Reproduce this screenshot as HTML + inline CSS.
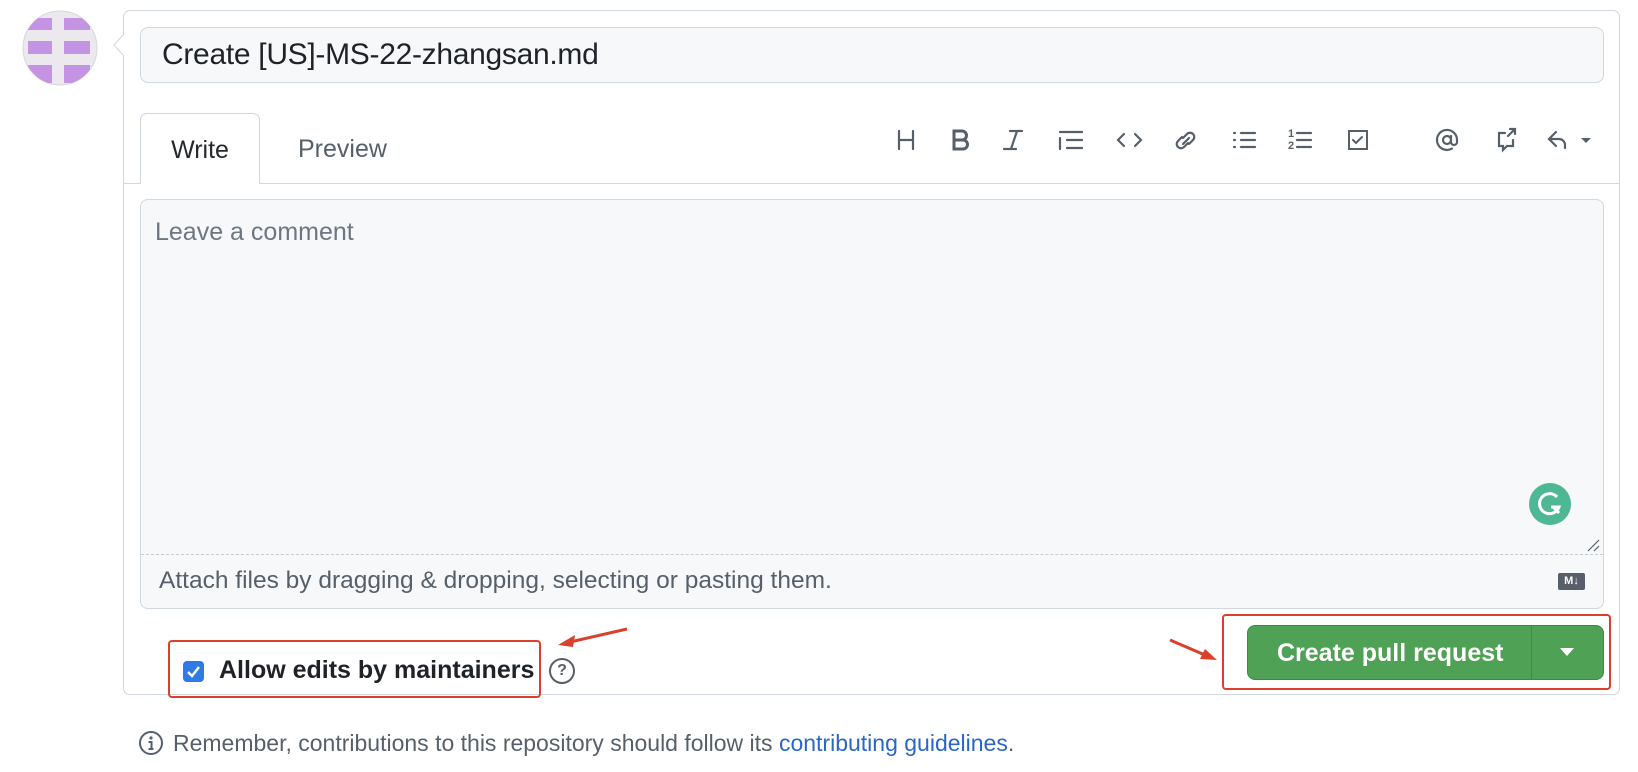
<!DOCTYPE html>
<html><head><meta charset="utf-8"><style>
*{box-sizing:border-box;margin:0;padding:0}
body{width:1638px;height:772px;background:#fff;font-family:"Liberation Sans",sans-serif;color:#24292f;position:relative;overflow:hidden}
.abs{position:absolute}
.box{left:123px;top:10px;width:1497px;height:685px;border:1px solid #d0d7de;border-radius:7px;background:#fff}
.title{left:140px;top:27px;width:1464px;height:56px;border:1px solid #d0d7de;border-radius:8px;background:#f6f8fa;font-size:30px;line-height:54px;padding-left:21px;color:#1f2328;letter-spacing:-0.3px}
.tabline{left:123px;top:183px;width:1497px;height:1px;background:#d0d7de}
.tab{left:140px;top:113px;width:120px;height:71px;border:1px solid #d0d7de;border-bottom:none;border-radius:7px 7px 0 0;background:#fff;font-size:25px;line-height:72px;text-align:center}
.prev{left:298px;top:113px;font-size:25px;line-height:72px;color:#57606a}
.ta{left:140px;top:199px;width:1464px;height:410px;border:1px solid #d0d7de;border-radius:8px;background:#f6f8fa}
.dash{left:141px;top:554px;width:1462px;border-top:1px dashed #c4ccd4}
.ph{left:155px;top:218px;font-size:25px;color:#6e7781}
.att{left:159px;top:567px;font-size:24.5px;color:#57606a}
.ic{top:127px}
.red{border:2px solid #d9412d;border-radius:4px}
.btn{left:1247px;top:625px;width:357px;height:55px;background:#4fa156;border:1px solid #3d8a44;border-radius:8px;color:#fff;font-size:25px;font-weight:bold}
</style></head><body>
<svg class="abs" style="left:22px;top:10px" width="76" height="76" viewBox="0 0 76 76">
<defs><clipPath id="c"><circle cx="38" cy="38" r="37"/></clipPath></defs>
<circle cx="38" cy="38" r="37" fill="#ebe8ee" stroke="#d8d8d8"/>
<g clip-path="url(#c)" fill="#c493e3"><rect x="6" y="8" width="24" height="12"/><rect x="42" y="8" width="26" height="12"/><rect x="6" y="31" width="24" height="13"/><rect x="42" y="31" width="26" height="13"/><rect x="6" y="55" width="24" height="18"/><rect x="42" y="55" width="26" height="18"/></g></svg>
<div class="abs box"></div>
<svg class="abs" style="left:113px;top:34px" width="12" height="22"><path d="M11 0 L1 11 L11 22" fill="#fff" stroke="#d0d7de"/></svg>
<div class="abs title">Create [US]-MS-22-zhangsan.md</div>
<div class="abs tabline"></div>
<div class="abs tab">Write</div>
<div class="abs prev">Preview</div>
<svg class="abs ic" style="left:890px" width="720" height="26" viewBox="0 0 720 26" fill="none" stroke="#57606a" stroke-width="2.2" stroke-linecap="round">
<path d="M9 4v18M23 4v18M9 13h14"/>
<path d="M64 4h8a4.5 4.5 0 0 1 0 9h-8zM64 13h9a4.5 4.5 0 0 1 0 9h-9z" stroke-width="3"/>
<path d="M120 4h12M114 22h12M127 4l-6 18"/>
<path d="M170 5h22M177 13h15M177 21h15M170 11v11"/>
<path d="M234 7l-6 6 6 6M245 7l6 6-6 6"/>
<path d="M293 11l4-4a4 4 0 0 1 6 6l-4 4M298 16l-4 4a4 4 0 0 1-6-6l4-4M293 17l6-6"/>
<path d="M344 6h1M344 13h1M344 20h1M351 6h14M351 13h14M351 20h14"/>
<path d="M407 6h14M407 13h14M407 20h14"/>
<path d="M459 4h18v18h-18zM463 13l3 3 6-6" stroke-width="2"/>
<circle cx="557" cy="13" r="4"/><path d="M561 9v6a3 3 0 0 0 6 0v-2a10 10 0 1 0-5 8.6"/>
<path d="M615 6h-6v13h4v4l4-4h6v-6M618 9l7-7M620 2h5v5"/>
<path d="M666 5l-7 7 7 7M659 12h10a6 6 0 0 1 6 6v3"/>
<path d="M691 11l5 5 5-5z" fill="#57606a" stroke="none"/>
</svg>
<div class="abs" style="left:1288px;top:128px;font-size:11px;font-weight:bold;color:#57606a;line-height:12px">1<br>2</div>
<div class="abs ta"></div>
<div class="abs dash"></div>
<div class="abs ph">Leave a comment</div>
<div class="abs att">Attach files by dragging &amp; dropping, selecting or pasting them.</div>
<svg class="abs" style="left:1529px;top:483px" width="42" height="42"><circle cx="21" cy="21" r="21" fill="#4eb894"/><path d="M28 14a10 10 0 1 0 2 10h-8" fill="none" stroke="#fff" stroke-width="3"/><path d="M24 24l6 6" stroke="#fff" stroke-width="3"/></svg>
<svg class="abs" style="left:1586px;top:538px" width="14" height="14"><path d="M2 13L13 2M8 13l5-5" stroke="#57606a" stroke-width="1.2"/></svg>
<div class="abs" style="left:1558px;top:573px;width:27px;height:17px;background:#57606a;border-radius:2px;color:#fff;font-size:11px;font-weight:bold;line-height:17px;text-align:center">M↓</div>
<div class="abs red" style="left:168px;top:640px;width:373px;height:58px"></div>
<div class="abs" style="left:183px;top:661px;width:21px;height:21px;background:#2f7ae5;border-radius:4px"><svg width="21" height="21"><path d="M5 11l4 4 7-9" fill="none" stroke="#fff" stroke-width="2.5"/></svg></div>
<div class="abs" style="left:219px;top:656px;font-size:25px;font-weight:bold;color:#1f2328">Allow edits by maintainers</div>
<div class="abs" style="left:549px;top:658px;width:26px;height:26px;border:2px solid #57606a;border-radius:50%;font-size:16px;font-weight:bold;color:#57606a;text-align:center;line-height:22px">?</div>
<div class="abs red" style="left:1222px;top:614px;width:389px;height:76px"></div>
<div class="abs btn"><span class="abs" style="left:29px;top:13px">Create pull request</span><div class="abs" style="left:283px;top:0;width:1px;height:53px;background:#3d8a44"></div><svg class="abs" style="left:312px;top:22px" width="14" height="10"><path d="M0 0h14L7 8z" fill="#fff"/></svg></div>
<svg class="abs" style="left:0;top:0" width="1638" height="772">
<path d="M627 629L570 642" stroke="#d9412d" stroke-width="3"/><path d="M558 645l17-10-2 12z" fill="#d9412d"/>
<path d="M1170 640L1205 655" stroke="#d9412d" stroke-width="3"/><path d="M1217 660l-17-1 5-10z" fill="#d9412d"/>
</svg>
<svg class="abs" style="left:138px;top:730px" width="26" height="26"><circle cx="13" cy="13" r="11" fill="none" stroke="#57606a" stroke-width="2"/><circle cx="13" cy="8" r="1.6" fill="#57606a"/><path d="M10.5 12h3v7M10.5 19h5" stroke="#57606a" stroke-width="2" fill="none"/></svg>
<div class="abs" style="left:173px;top:730px;font-size:23px;color:#57606a">Remember, contributions to this repository should follow its <span style="color:#2a66c8">contributing guidelines</span>.</div>
</body></html>
